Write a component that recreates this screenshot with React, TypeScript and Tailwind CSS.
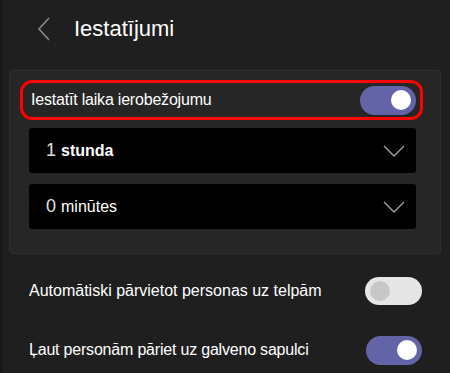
import React from "react";

function Chevron() {
  return (
    <svg width="22" height="12" viewBox="0 0 22 12" fill="none">
      <path d="M1 1 L11 11 L21 1" stroke="#a0a0a0" strokeWidth="1.4" />
    </svg>
  );
}

function Toggle({ on }: { on: boolean }) {
  return on ? (
    <div className="w-[56px] h-[29px] rounded-full bg-[#6264a7] flex items-center justify-end pr-[5px]">
      <div className="w-[20px] h-[20px] rounded-full bg-white" />
    </div>
  ) : (
    <div className="w-[57px] h-[28px] rounded-full bg-[#e6e6e6] flex items-center justify-start pl-[5px]">
      <div className="w-[20px] h-[20px] rounded-full bg-[#c8c8c8]" />
    </div>
  );
}

export default function App() {
  return (
    <div
      className="w-[450px] h-[373px] bg-[#1f1f1f] text-white overflow-hidden flex"
      style={{ fontFamily: '"Liberation Sans", Arial, sans-serif' }}
    >
      <div className="w-[3px] bg-[#1a1a1a]" />
      <div className="flex-1 flex flex-col">
        <div className="h-[57px] flex items-center pl-[34px]">
          <svg width="14" height="24" viewBox="0 0 14 24" fill="none">
            <path d="M12 1 L2 12 L12 23" stroke="#8a8a8a" strokeWidth="1.6" />
          </svg>
          <span className="ml-[23px] text-[22px] leading-none">Iestatījumi</span>
        </div>
        <div className="ml-[6px] mr-[9px] mt-[13px] h-[184px] rounded-[4px] bg-[#262626] border border-[#2f2f2f] pl-[10px] pr-[17px] pt-[9px]">
          <div className="h-[40px] rounded-[12px] border-[3px] border-[#ff0000] flex items-center justify-between pl-[8px] pr-[4px]">
            <span className="text-[16px] tracking-[-0.2px]">Iestatīt laika ierobežojumu</span>
            <Toggle on />
          </div>
          <div className="mt-[8px] h-[45px] rounded-[3px] bg-black flex items-center justify-between pl-[17px] pr-[11px] ml-[9px] mr-[7px]">
            <span className="text-[18px]">
              <span className="text-[#e0e0e0] font-light">1</span>{" "}
              <span className="font-bold text-[16px]">stunda</span>
            </span>
            <Chevron />
          </div>
          <div className="mt-[11px] h-[45px] rounded-[3px] bg-black flex items-center justify-between pl-[17px] pr-[11px] ml-[9px] mr-[7px]">
            <span className="text-[18px]">
              <span className="text-[#e0e0e0] font-light">0</span>{" "}
              <span className="text-[16px]">minūtes</span>
            </span>
            <Chevron />
          </div>
        </div>
        <div className="flex items-center justify-between pl-[26px] pr-[28px] mt-[23px] h-[28px]">
          <span className="text-[16px]">Automātiski pārvietot personas uz telpām</span>
          <Toggle on={false} />
        </div>
        <div className="flex items-center justify-between pl-[26px] pr-[28px] mt-[31px] h-[28px]">
          <span className="text-[16px] tracking-[-0.2px]">Ļaut personām pāriet uz galveno sapulci</span>
          <Toggle on />
        </div>
      </div>
    </div>
  );
}
